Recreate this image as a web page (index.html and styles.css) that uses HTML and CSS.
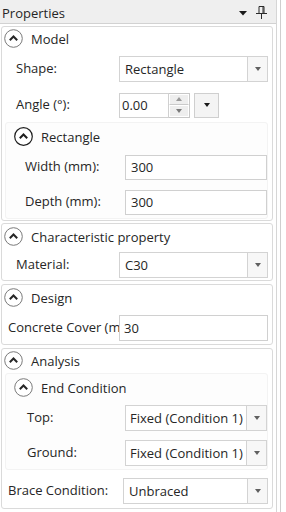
FILE: index.html
```html
<!DOCTYPE html>
<html>
<head>
<meta charset="utf-8">
<link rel="stylesheet" href="styles.css">
</head>
<body>
<div class="frame">
  <div class="panel">
    <div class="titlebar">
      <span class="title">Properties</span>
      <span class="tools">
        <svg class="t-drop" width="8" height="5" viewBox="0 0 8 5"><path d="M0 0H8L4 4.5Z" fill="#1a1a1a"/></svg>
        <svg class="t-pin" width="11" height="13" viewBox="0 0 11 13"><path d="M3 0.5H8V7.5M3 0.5V7.5M7 0.5V7.5" stroke="#2a2a2a" stroke-width="1" fill="none"/><path d="M0 7.5H11" stroke="#2a2a2a" stroke-width="1"/><path d="M5.5 8V13" stroke="#2a2a2a" stroke-width="1"/></svg>
      </span>
    </div>

    <div class="body">
      <section class="group g1">
        <div class="ghead">
          <svg class="exp" width="19" height="19" viewBox="0 0 19 19"><circle cx="9.5" cy="9.5" r="8.8" fill="#fff" stroke="#7a7a7a" stroke-width="1"/><path d="M5.8 11.2L9.5 7.5L13.2 11.2" fill="none" stroke="#262626" stroke-width="2"/></svg>
          <span>Model</span>
        </div>
        <div class="row mt8">
          <label class="lbl">Shape:</label>
          <div class="combo"><span class="val">Rectangle</span><span class="btn"><i class="arr"></i></span></div>
        </div>
        <div class="row mt10">
          <label class="lbl">Angle (°):</label>
          <div class="angle">
            <div class="tbox num">0.00</div>
            <div class="spin"><span class="up"><i></i></span><span class="dn"><i></i></span></div>
            <div class="sqbtn"><i class="arr dark"></i></div>
          </div>
        </div>
        <div class="sub mt4">
          <div class="shead">
            <svg class="exp" width="19" height="19" viewBox="0 0 19 19"><circle cx="9.5" cy="9.5" r="8.8" fill="#fff" stroke="#1e1e1e" stroke-width="1.2"/><path d="M5.8 11.2L9.5 7.5L13.2 11.2" fill="none" stroke="#1e1e1e" stroke-width="2"/></svg>
            <span>Rectangle</span>
          </div>
          <div class="srow mt7">
            <label class="slbl">Width (mm):</label>
            <div class="tbox wide">300</div>
          </div>
          <div class="srow mt9">
            <label class="slbl">Depth (mm):</label>
            <div class="tbox wide">300</div>
          </div>
        </div>
      </section>

      <section class="group g2">
        <div class="ghead">
          <svg class="exp" width="19" height="19" viewBox="0 0 19 19"><circle cx="9.5" cy="9.5" r="8.8" fill="#fff" stroke="#7a7a7a" stroke-width="1"/><path d="M5.8 11.2L9.5 7.5L13.2 11.2" fill="none" stroke="#262626" stroke-width="2"/></svg>
          <span>Characteristic property</span>
        </div>
        <div class="row mt5">
          <label class="lbl">Material:</label>
          <div class="combo"><span class="val">C30</span><span class="btn"><i class="arr"></i></span></div>
        </div>
      </section>

      <section class="group g3">
        <div class="ghead">
          <svg class="exp" width="19" height="19" viewBox="0 0 19 19"><circle cx="9.5" cy="9.5" r="8.8" fill="#fff" stroke="#7a7a7a" stroke-width="1"/><path d="M5.8 11.2L9.5 7.5L13.2 11.2" fill="none" stroke="#262626" stroke-width="2"/></svg>
          <span>Design</span>
        </div>
        <div class="row mt7">
          <label class="lbl tight">Concrete Cover (mm):</label>
          <div class="tbox full">30</div>
        </div>
      </section>

      <section class="group g4">
        <div class="ghead">
          <svg class="exp" width="19" height="19" viewBox="0 0 19 19"><circle cx="9.5" cy="9.5" r="8.8" fill="#fff" stroke="#7a7a7a" stroke-width="1"/><path d="M5.8 11.2L9.5 7.5L13.2 11.2" fill="none" stroke="#262626" stroke-width="2"/></svg>
          <span>Analysis</span>
        </div>
        <div class="sub mt2">
          <div class="shead">
            <svg class="exp" width="19" height="19" viewBox="0 0 19 19"><circle cx="9.5" cy="9.5" r="8.8" fill="#fff" stroke="#7a7a7a" stroke-width="1"/><path d="M5.8 11.2L9.5 7.5L13.2 11.2" fill="none" stroke="#262626" stroke-width="2"/></svg>
            <span>End Condition</span>
          </div>
          <div class="srow mt7">
            <label class="slbl ind">Top:</label>
            <div class="combo wide"><span class="val sval">Fixed (Condition 1)</span><span class="btn"><i class="arr"></i></span></div>
          </div>
          <div class="srow mt9">
            <label class="slbl ind">Ground:</label>
            <div class="combo wide"><span class="val sval">Fixed (Condition 1)</span><span class="btn"><i class="arr"></i></span></div>
          </div>
        </div>
        <div class="row mt8">
          <label class="lbl tight brace">Brace Condition:</label>
          <div class="combo bc"><span class="val">Unbraced</span><span class="btn"><i class="arr"></i></span></div>
        </div>
      </section>
    </div>
  </div>
</div>
</body>
</html>
```

FILE: styles.css
```css
html, body {
  margin: 0;
  padding: 0;
  background: #ffffff;
}

body {
  font-family: "Open Sans", "Noto Sans", sans-serif;
  font-size: 13px;
  color: #262626;
}

.frame {
  width: 281px;
  height: 512px;
  box-sizing: border-box;
  border-right: 1px solid #cfcfcf;
  overflow: hidden;
}

.panel {
  width: 277px;
  height: 512px;
  box-sizing: border-box;
  border-right: 1px solid #d6d6d6;
}

.titlebar {
  height: 24px;
  box-sizing: border-box;
  background: #efefef;
  border-bottom: 1px solid #d2d2d2;
  display: flex;
  align-items: center;
  justify-content: space-between;
  padding: 2px 0 0 2px;
}

.title {
  line-height: 20px;
}

.tools {
  display: flex;
  align-items: center;
  gap: 9px;
  padding-right: 9px;
}

.t-drop {
  margin-top: 1px;
}

.body {
  padding-top: 2px;
}

.group {
  margin: 0 3px 0 1px;
  border: 1px solid #dadada;
  border-radius: 3px;
  display: flex;
  flex-direction: column;
  padding: 0 4px 2px 1px;
}

.g1 { padding-bottom: 1px; }
.g2 { margin-top: 2px; padding-bottom: 2px; }
.g3 { margin-top: 3px; padding-bottom: 3px; }
.g4 { margin-top: 3px; padding-bottom: 4px; }

.ghead, .shead {
  height: 21px;
  display: flex;
  align-items: center;
  gap: 8px;
}

.g1 > .ghead { margin-top: 1px; }
.g2 > .ghead, .g3 > .ghead { margin-top: 2px; }
.g4 > .ghead { margin-top: 1px; }

.ghead .exp { margin-left: 1px; }

.shead { margin-top: 3px; }
.shead .exp { margin-left: 8px; }

.exp { flex: none; }

.row, .srow {
  height: 26px;
  display: flex;
  align-items: center;
}

.mt2 { margin-top: 2px; }
.mt4 { margin-top: 4px; }
.mt5 { margin-top: 5px; }
.mt7 { margin-top: 7px; }
.mt8 { margin-top: 8px; }
.mt9 { margin-top: 9px; }
.mt10 { margin-top: 10px; }

.g1 > .mt8 { margin-top: 7px; }

.lbl {
  width: 116px;
  box-sizing: border-box;
  padding-left: 13px;
  white-space: nowrap;
  overflow: hidden;
  flex: none;
  margin-top: -2px;
}

.lbl.tight { padding-left: 5px; }
.lbl.brace { width: 118px; }

.sub {
  background: #fdfdfd;
  border: 1px solid #f3f3f3;
  border-radius: 3px;
  margin-left: 2px;
  padding-bottom: 3px;
}

.slbl {
  width: 119px;
  box-sizing: border-box;
  padding-left: 19px;
  white-space: nowrap;
  flex: none;
  margin-top: -3px;
}

.slbl.ind { padding-left: 21px; }

.combo {
  flex: 1;
  height: 26px;
  box-sizing: border-box;
  border: 1px solid #d3d3d3;
  background: #ffffff;
  display: flex;
  align-items: stretch;
}

.combo.bc { margin-left: 2px; }

.val {
  flex: 1;
  display: flex;
  align-items: center;
  padding-left: 5px;
  white-space: nowrap;
  overflow: hidden;
}

.sval { padding-left: 4px; }

.btn {
  width: 19px;
  flex: none;
  border-left: 1px solid #d3d3d3;
  background: #f7f7f7;
  display: flex;
  align-items: center;
  justify-content: center;
}

.arr {
  width: 0;
  height: 0;
  border-left: 3.5px solid transparent;
  border-right: 3.5px solid transparent;
  border-top: 4px solid #606060;
}

.arr.dark { border-top-color: #1a1a1a; }

.tbox {
  height: 25px;
  box-sizing: border-box;
  border: 1px solid #d0d0d0;
  background: #fff;
  display: flex;
  align-items: center;
}

.tbox.wide {
  flex: 1;
  padding-left: 5px;
}

.tbox.full {
  flex: 1;
  padding-left: 4px;
  height: 26px;
}

.angle {
  display: flex;
  align-items: center;
  height: 25px;
}

.tbox.num {
  width: 50px;
  padding-left: 2px;
}

.spin {
  width: 21px;
  height: 25px;
  box-sizing: border-box;
  display: flex;
  flex-direction: column;
  border: 1px solid #c7c7c7;
  border-left: none;
}

.spin span {
  flex: 1;
  background: #eeeeee;
  display: flex;
  align-items: center;
  justify-content: center;
  border: 1px solid #ffffff;
}

.spin .up { border-bottom: 1px solid #cacaca; }

.spin .up i {
  width: 0;
  height: 0;
  border-left: 3.5px solid transparent;
  border-right: 3.5px solid transparent;
  border-bottom: 4px solid #9a9a9a;
}

.spin .dn i {
  width: 0;
  height: 0;
  border-left: 3.5px solid transparent;
  border-right: 3.5px solid transparent;
  border-top: 4px solid #7a7a7a;
}

.sqbtn {
  width: 25px;
  height: 25px;
  box-sizing: border-box;
  margin-left: 4px;
  border: 1px solid #cfcfcf;
  background: #f4f4f4;
  display: flex;
  align-items: center;
  justify-content: center;
}
```
